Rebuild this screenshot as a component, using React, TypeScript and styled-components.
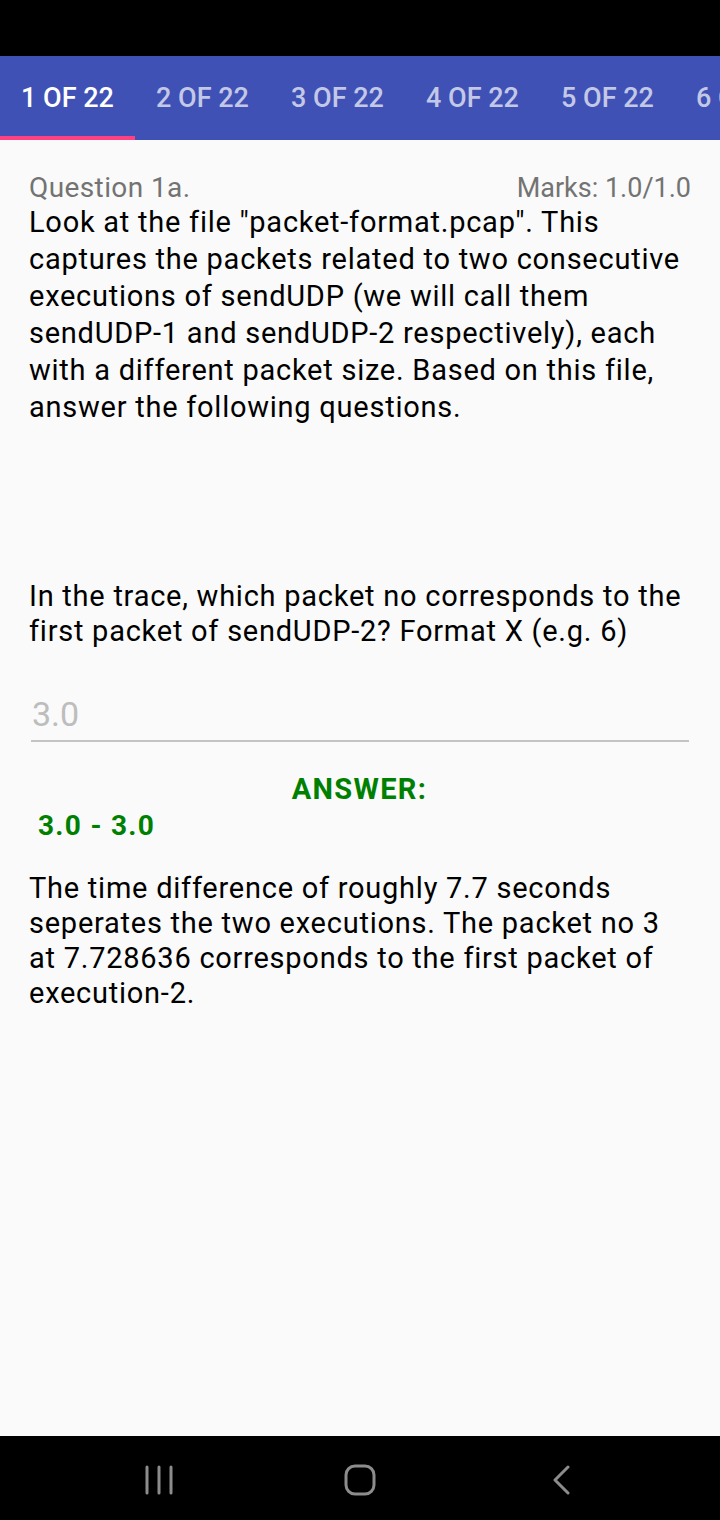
import React from "react";
import styled, { createGlobalStyle } from "styled-components";

const Global = createGlobalStyle`
  html, body { margin: 0; padding: 0; background: #000; }
  body { font-family: Roboto, "Noto Sans", sans-serif; }
  #root { width: 720px; height: 1520px; }
`;

const Screen = styled.div`
  width: 720px;
  height: 1520px;
  display: flex;
  flex-direction: column;
  background: #fafafa;
  overflow: hidden;
`;

const StatusBar = styled.div`
  height: 56px;
  flex: none;
  background: #000;
`;

const TabBar = styled.div`
  height: 84px;
  flex: none;
  background: #3f51b5;
  display: flex;
  overflow: hidden;
`;

const Tab = styled.div<{ $active?: boolean }>`
  flex: none;
  width: 135px;
  height: 84px;
  display: flex;
  align-items: center;
  justify-content: center;
  font-family: Roboto, sans-serif;
  font-weight: 500;
  font-size: 27px;
  white-space: nowrap;
  color: ${(p) => (p.$active ? "#ffffff" : "rgba(255,255,255,0.7)")};
  box-shadow: ${(p) => (p.$active ? "inset 0 -4px 0 #ff4081" : "none")};
`;

const Content = styled.div`
  flex: 1;
  padding: 31px 30px 0 29px;
  display: flex;
  flex-direction: column;
`;

const HeaderRow = styled.div`
  display: flex;
  justify-content: space-between;
  align-items: baseline;
  font-size: 28px;
  line-height: 34px;
  color: #737373;
`;

const QuestionNo = styled.span`
  letter-spacing: 0.4px;
`;

const Marks = styled.span`
  font-size: 27px;
  margin-right: -1px;
`;

const Intro = styled.p`
  margin: -1px 0 0;
  font-size: 29px;
  line-height: 37px;
  letter-spacing: 0.75px;
  color: #000;
`;

const Prompt = styled.p`
  margin: 153px 0 0;
  font-size: 29px;
  line-height: 35px;
  letter-spacing: 0.75px;
  color: #000;
`;

const Field = styled.div`
  margin: 45px 1px 0 2px;
  padding: 0 1px 6px;
  border-bottom: 2px solid #c4c4c4;
  font-size: 34px;
  line-height: 40px;
  color: #bdbdbd;
`;

const AnswerLabel = styled.div`
  margin-top: 29px;
  text-align: center;
  font-weight: 700;
  font-size: 29px;
  line-height: 36px;
  letter-spacing: 1.3px;
  color: #008000;
`;

const AnswerRange = styled.div`
  padding-left: 9px;
  font-weight: 700;
  font-size: 28px;
  line-height: 38px;
  letter-spacing: 1.3px;
  color: #008000;
`;

const Explanation = styled.p`
  margin: 26px 0 0;
  font-size: 29px;
  line-height: 35px;
  letter-spacing: 0.75px;
  color: #000;
`;

const NavBar = styled.div`
  height: 84px;
  flex: none;
  background: #000;
  display: grid;
  grid-template-columns: repeat(3, 1fr);
  align-items: center;
  justify-items: center;
  padding: 4px 58px 0;
  box-sizing: border-box;
`;

const NavIcon = styled.svg`
  display: block;
`;

const tabs = ["1 OF 22", "2 OF 22", "3 OF 22", "4 OF 22", "5 OF 22", "6 OF 22"];

export default function App() {
  return (
    <Screen>
      <Global />
      <StatusBar />
      <TabBar>
        {tabs.map((t, i) => (
          <Tab key={t} $active={i === 0}>
            {t}
          </Tab>
        ))}
      </TabBar>
      <Content>
        <HeaderRow>
          <QuestionNo>Question 1a.</QuestionNo>
          <Marks>Marks: 1.0/1.0</Marks>
        </HeaderRow>
        <Intro>
          Look at the file "packet-format.pcap". This captures the packets related to two
          consecutive executions of sendUDP (we will call them sendUDP-1 and sendUDP-2
          respectively), each with a different packet size. Based on this file, answer the
          following questions.
        </Intro>
        <Prompt>
          In the trace, which packet no corresponds to the first packet of sendUDP-2? Format X
          (e.g. 6)
        </Prompt>
        <Field>3.0</Field>
        <AnswerLabel>ANSWER:</AnswerLabel>
        <AnswerRange>3.0 - 3.0</AnswerRange>
        <Explanation>
          The time difference of roughly 7.7 seconds seperates the two executions. The packet no
          3 at 7.728636 corresponds to the first packet of execution-2.
        </Explanation>
      </Content>
      <NavBar>
        <NavIcon width="30" height="30" viewBox="0 0 30 30">
          <g stroke="#8c8c8c" strokeWidth="3" strokeLinecap="round">
            <line x1="3" y1="2" x2="3" y2="28" />
            <line x1="15" y1="2" x2="15" y2="28" />
            <line x1="27" y1="2" x2="27" y2="28" />
          </g>
        </NavIcon>
        <NavIcon width="32" height="32" viewBox="0 0 32 32">
          <rect x="2" y="2" width="28" height="28" rx="9" fill="none" stroke="#8c8c8c" strokeWidth="3" />
        </NavIcon>
        <NavIcon width="20" height="30" viewBox="0 0 20 30">
          <polyline points="17,2 4,15 17,28" fill="none" stroke="#8c8c8c" strokeWidth="3" strokeLinecap="round" strokeLinejoin="round" />
        </NavIcon>
      </NavBar>
    </Screen>
  );
}
